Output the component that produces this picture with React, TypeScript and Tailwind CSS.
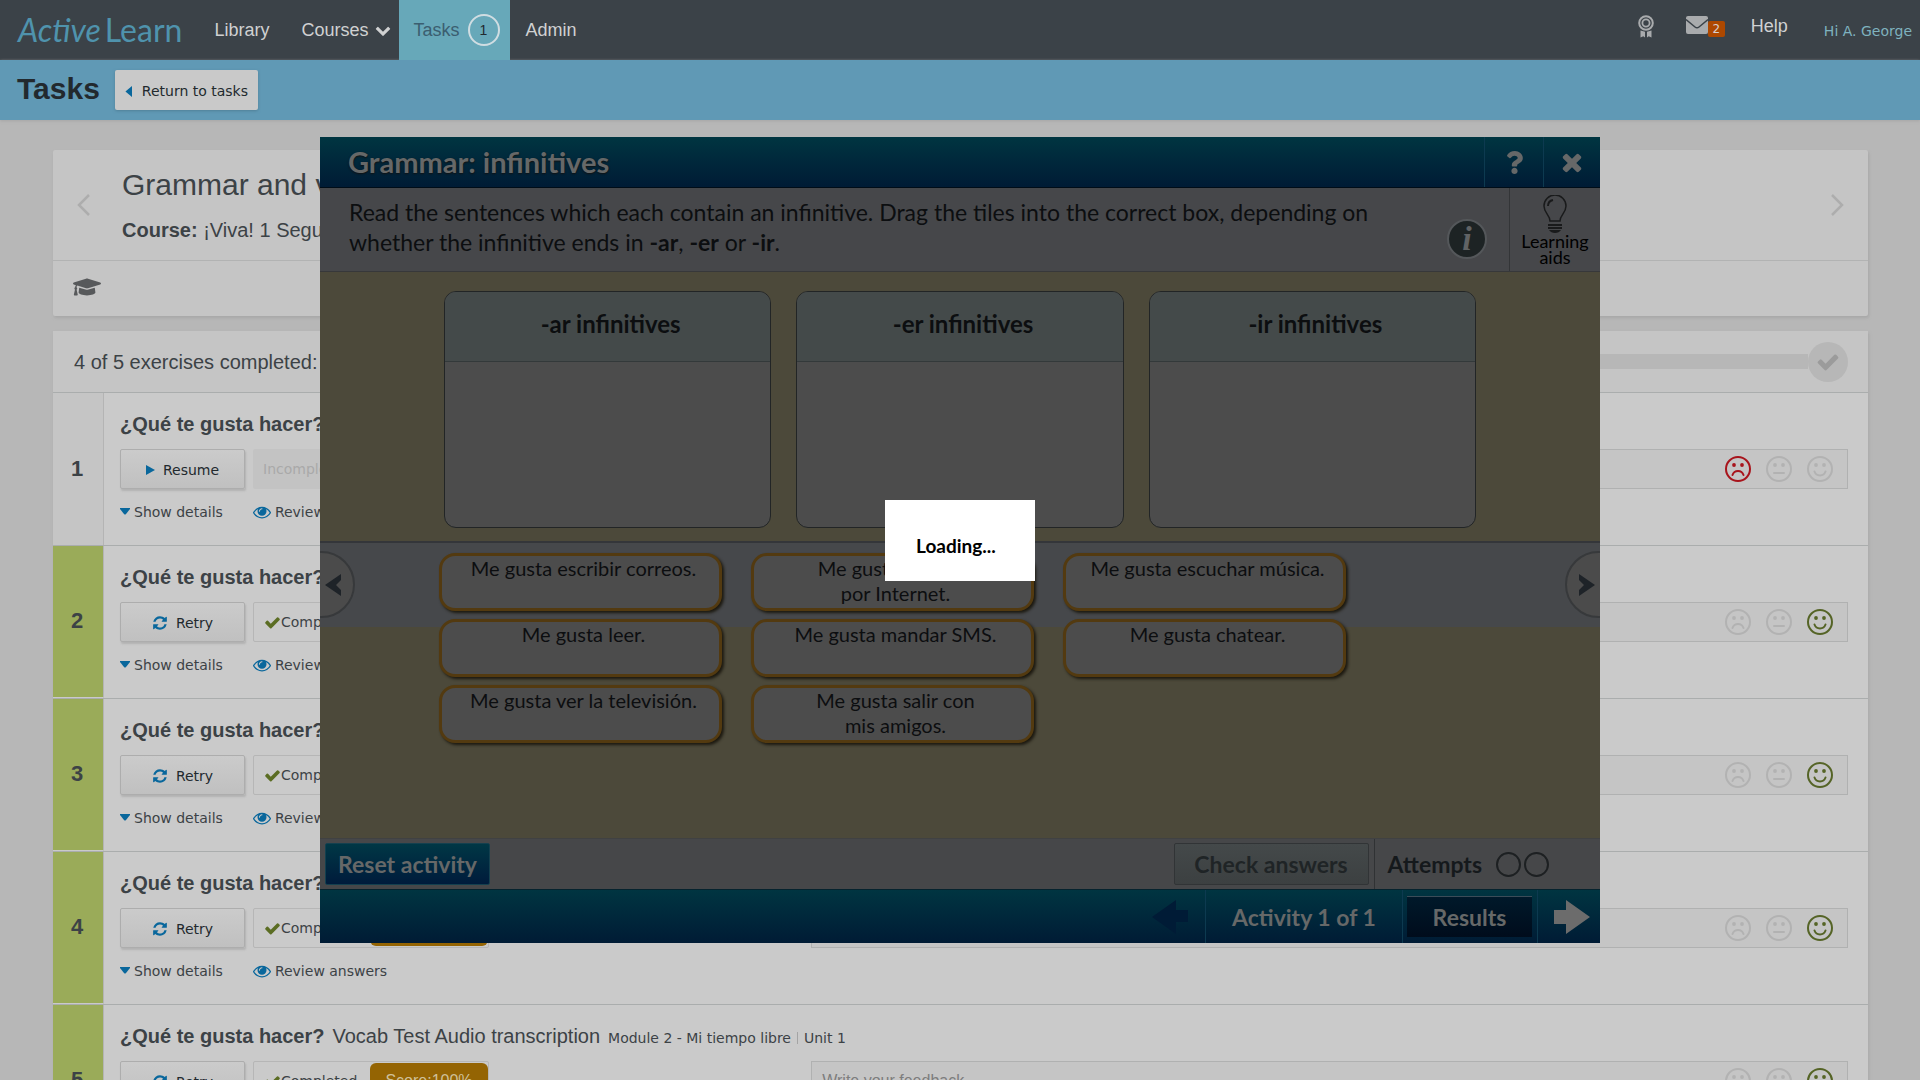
import { useState } from "react";
import { FaGraduationCap, FaQuestion } from "react-icons/fa";

type Mood = "sad" | "neutral" | "happy";

interface Exercise {
  id: number;
  title: string;
  detail?: string;
  place?: string[];
  done: boolean;
  mood: Mood;
}

const exercises: Exercise[] = [
  { id: 1, title: "¿Qué te gusta hacer?", done: false, mood: "sad" },
  { id: 2, title: "¿Qué te gusta hacer?", done: true, mood: "happy" },
  { id: 3, title: "¿Qué te gusta hacer?", done: true, mood: "happy" },
  { id: 4, title: "¿Qué te gusta hacer?", done: true, mood: "happy" },
  {
    id: 5,
    title: "¿Qué te gusta hacer?",
    detail: "Vocab Test Audio transcription",
    place: ["Module 2 - Mi tiempo libre", "Unit 1"],
    done: true,
    mood: "happy",
  },
];

const boxes = ["-ar infinitives", "-er infinitives", "-ir infinitives"];

const tiles = [
  ["Me gusta escribir correos."],
  ["Me gusta navegar", "por Internet."],
  ["Me gusta escuchar música."],
  ["Me gusta leer."],
  ["Me gusta mandar SMS."],
  ["Me gusta chatear."],
  ["Me gusta ver la televisión."],
  ["Me gusta salir con", "mis amigos."],
];

// --- ICONS ---
const paths = {
  check:
    "M1671 566q0 40-28 68l-724 724-136 136q-28 28-68 28t-68-28l-136-136-362-362q-28-28-28-68t28-68l136-136q28-28 68-28t68 28l294 295 656-657q28-28 68-28t68 28l136 136q28 28 28 68z",
  times:
    "M1490 1322q0 40-28 68l-136 136q-28 28-68 28t-68-28l-294-294-294 294q-28 28-68 28t-68-28l-136-136q-28-28-28-68t28-68l294-294-294-294q-28-28-28-68t28-68l136-136q28-28 68-28t68 28l294 294 294-294q28-28 68-28t68 28l136 136q28 28 28 68t-28 68l-294 294 294 294q28 28 28 68z",
  chevronDown:
    "M1683 808l-742 741q-19 19-45 19t-45-19l-742-741q-19-19-19-45.5t19-45.5l166-165q19-19 45-19t45 19l531 531 531-531q19-19 45-19t45 19l166 165q19 19 19 45.5t-19 45.5z",
  eye: "M1664 960q-152-236-381-353 61 104 61 225 0 185-131.5 316.5t-316.5 131.5-316.5-131.5-131.5-316.5q0-121 61-225-229 117-381 353 133 205 333.5 326.5t434.5 121.5 434.5-121.5 333.5-326.5zm-720-384q0-20-14-34t-34-14q-125 0-214.5 89.5t-89.5 214.5q0 20 14 34t34 14 34-14 14-34q0-86 61-147t147-61q20 0 34-14t14-34zm848 384q0 34-20 69-140 230-376.5 368.5t-499.5 138.5-499.5-139-376.5-368q-20-35-20-69t20-69q140-229 376.5-368t499.5-139 499.5 139 376.5 368q20 35 20 69z",
  refresh:
    "M1639 1056q0 5-1 7-64 268-268 434.5t-478 166.5q-146 0-282.5-55t-243.5-157l-129 129q-19 19-45 19t-45-19-19-45v-448q0-26 19-45t45-19h448q26 0 45 19t19 45-19 45l-137 137q71 66 161 102t187 36q134 0 250-65t186-179q11-17 53-117 8-23 30-23h192q13 0 22.5 9.5t9.5 22.5zm25-800v448q0 26-19 45t-45 19h-448q-26 0-45-19t-19-45 19-45l138-138q-148-137-349-137-134 0-250 65t-186 179q-11 17-53 117-8 23-30 23h-199q-13 0-22.5-9.5t-9.5-22.5v-7q65-268 270-434.5t480-166.5q146 0 284 55.5t245 156.5l130-129q19-19 45-19t45 19 19 45z",
};

function Glyph({ name, className }: { name: keyof typeof paths; className: string }) {
  return (
    <svg viewBox="0 0 1792 1792" fill="currentColor" className={className}>
      <path d={paths[name]} />
    </svg>
  );
}

function Face({ mood }: { mood: Mood }) {
  return (
    <svg viewBox="0 0 26 26" className="size-[26px]" fill="none" stroke="currentColor" strokeWidth="2" strokeLinecap="round">
      <circle cx="13" cy="13" r="12" />
      <circle cx="9" cy="9" r="1.9" fill="currentColor" stroke="none" />
      <circle cx="17" cy="9" r="1.9" fill="currentColor" stroke="none" />
      {mood === "sad" && <path d="M7.5 19c.8-2.4 3-4 5.500-4s4.700 1.600 5.500 4" />}
      {mood === "neutral" && <path d="M8 17h10" />}
      {mood === "happy" && <path d="M7.500 15.500c.8 2.300 3 3.900 5.500 3.900s4.700-1.600 5.500-3.900" />}
    </svg>
  );
}

function moodColor(mood: Mood, active: Mood) {
  if (mood !== active) return "text-[#b2b2b2]";
  return mood === "sad" ? "text-[#a8141c]" : "text-[#556426]";
}

// --- PAGE ---
function TopBar() {
  return (
    <header className="flex h-[60px] items-stretch bg-[#3b4248] text-lg text-[#d0d1d2]">
      <a href="#home" className="flex items-center pl-[18px] pr-8 font-['Lato',sans-serif] text-[32px] leading-9 text-[#4f93ad]">
        <span className="italic">Active</span>
        <span className="pl-1">Learn</span>
      </a>
      <nav className="flex">
        <a href="#library" className="flex items-center pr-8">Library</a>
        <a href="#courses" className="flex items-center gap-1.5 pr-2">
          Courses
          <Glyph name="chevronDown" className="size-4" />
        </a>
        <a href="#tasks" className="flex items-center gap-2 bg-[#67a8b9] pl-[15px] pr-2.5 text-[#3b5e70]">
          Tasks
          <span className="flex size-8 items-center justify-center rounded-full border-2 border-[#d0dde2] text-sm text-[#22292e]">1</span>
        </a>
        <a href="#admin" className="flex items-center pl-4">Admin</a>
      </nav>
      <div className="ml-auto flex items-start pr-2">
        <a href="#badges" aria-label="Badges" className="mt-[15px] text-[#a9abad]">
          <svg viewBox="0 0 16 23" className="h-[23px] w-4" fill="currentColor">
            <circle cx="8" cy="8" r="6.800" fill="none" stroke="currentColor" strokeWidth="2" />
            <circle cx="8" cy="8" r="3.600" fill="none" stroke="currentColor" strokeWidth="1.800" />
            <path d="M2.500 15.500v7l2.800-1.300 1.700 1.300v-5.800zM13.500 15.500v7l-2.800-1.300-1.700 1.300v-5.800z" />
          </svg>
        </a>
        <a href="#messages" className="ml-8 mt-4 flex items-start">
          <svg viewBox="0 0 22 18" className="h-[18px] w-[22px]">
            <rect width="22" height="18" rx="2" fill="#a9abad" />
            <path d="M0 3.500l9 7.500q2 1.600 4 0l9-7.500" fill="none" stroke="#3b4248" strokeWidth="1.500" />
          </svg>
          <span className="mt-[5px] h-4 w-[17px] rounded-xs bg-[#ad4800] text-center font-['DejaVu_Sans',sans-serif] text-xs leading-4 text-[#d8d0cc]">2</span>
        </a>
        <a href="#help" className="ml-[26px] mt-3 leading-7">Help</a>
        <a href="#profile" className="ml-9 mt-[21px] font-['DejaVu_Sans',sans-serif] text-sm leading-5 text-[#7fb2bf]">Hi A. George</a>
      </div>
    </header>
  );
}

function ExerciseRow({ exercise }: { exercise: Exercise }) {
  const [mood, setMood] = useState<Mood>(exercise.mood);
  const [feedback, setFeedback] = useState("");

  return (
    <li className="flex border-b border-[#aaadad]">
      <div
        className={`flex w-[51px] shrink-0 items-center justify-center border-r border-[#b4b4b4] pb-0.5 pr-0.5 text-[22px] font-bold ${
          exercise.done ? "border-b border-b-[#cacaca] bg-[#9aab59]" : "bg-[#c5c5c5]"
        }`}
      >
        {exercise.id}
      </div>
      <div className="min-w-0 flex-1 bg-[#cacaca] pb-[23px] pl-4 pr-5 pt-[17px]">
        <h3 className="flex items-baseline gap-2 whitespace-nowrap text-xl leading-7">
          <b>{exercise.title}</b>
          {exercise.detail && <span>{exercise.detail}</span>}
          {exercise.place && (
            <small className="flex gap-1.5 font-['DejaVu_Sans',sans-serif] text-sm leading-5">
              <span>{exercise.place[0]}</span>
              <span className="my-1 border-l border-[#a4a4a4]" />
              <span>{exercise.place[1]}</span>
            </small>
          )}
        </h3>
        <div className="mt-[11px] flex h-10 font-['DejaVu_Sans',sans-serif] text-sm">
          <div className="flex w-2/5 gap-2">
            <button
              type="button"
              className="flex w-[125px] items-center justify-center gap-2 rounded-xs border border-[#adadad] bg-linear-to-b from-[#cbcbcb] to-[#c0c0c0] pt-0.5 text-[#22292e] shadow-[1px_2px_2px_#b2b2b2]"
            >
              {exercise.done ? (
                <Glyph name="refresh" className="size-4 text-[#09679c]" />
              ) : (
                <svg viewBox="0 0 9 10" className="h-2.5 w-[9px]" fill="#09679c">
                  <path d="M0 0l9 5-9 5z" />
                </svg>
              )}
              {exercise.done ? "Retry" : "Resume"}
            </button>
            {exercise.done ? (
              <div className="flex h-10 w-[236px] items-center justify-between rounded-xs border border-[#b6b6b6] pl-2.5">
                <span className="flex items-center">
                  <Glyph name="check" className="size-[17px] text-[#5b6d23]" />
                  Completed
                </span>
                <span className="flex h-9 w-[118px] items-center justify-center rounded-md bg-[#946403] font-['Liberation_Sans',Arial,sans-serif] text-base text-[#cfc09a]">
                  Score:100%
                </span>
              </div>
            ) : (
              <div className="flex h-10 w-[118px] items-center rounded-xs bg-[#c3c3c3] pl-2.5 text-[#a9a9a9]">Incomplete</div>
            )}
          </div>
          <div className="flex flex-1 items-center gap-[15px] border border-[#b0b1b1] bg-[#c5c5c5] pl-2.5 pr-3.5">
            <input
              value={feedback}
              onChange={(e) => setFeedback(e.target.value)}
              aria-label="Write your feedback"
              placeholder="Write your feedback"
              className="min-w-0 flex-1 font-['Liberation_Sans',Arial,sans-serif] text-base outline-none placeholder:text-[#7d7d7d]"
            />
            {(["sad", "neutral", "happy"] as Mood[]).map((m) => (
              <button key={m} type="button" aria-label={m} onClick={() => setMood(m)} className={moodColor(m, mood)}>
                <Face mood={m} />
              </button>
            ))}
          </div>
        </div>
        <div className="mt-[13px] flex gap-[30px] font-['DejaVu_Sans',sans-serif] text-sm leading-5">
          <a href="#details" className="flex gap-1">
            <svg viewBox="0 0 10 7" className="mt-1.5 h-[7px] w-2.5" fill="#09679c">
              <path d="M0 0h10v1l-4 5q-1 1-2 0l-4-5z" />
            </svg>
            Show details
          </a>
          <a href="#answers" className="flex items-center gap-1">
            <Glyph name="eye" className="size-[18px] text-[#09679c]" />
            Review answers
          </a>
        </div>
      </div>
    </li>
  );
}

function TasksPage() {
  return (
    <div className="text-[#3c4246]">
      <TopBar />
      <div className="flex h-[60px] items-center gap-[15px] bg-[#6099b5] pl-[17px] shadow-[0_1px_3px_#a5a5a5]">
        <h1 className="pb-0.5 text-3xl font-bold leading-9 text-[#22292e]">Tasks</h1>
        <button
          type="button"
          className="flex h-10 items-center gap-2.5 rounded-xs bg-[#c9c9c9] px-2.5 pt-0.5 font-['DejaVu_Sans',sans-serif] text-sm text-[#22292e] shadow-[0_1px_3px_#4f7f96]"
        >
          <svg viewBox="0 0 7 11" className="h-[11px] w-[7px]" fill="#09679c">
            <path d="M7 0v11l-6-5q-1-.5 0-1z" />
          </svg>
          Return to tasks
        </button>
      </div>

      <main className="space-y-[15px] pl-[53px] pr-13 pt-[30px]">
        <section className="rounded-xs bg-[#c5c5c5] shadow-[1px_2px_3px_#a8a8a8]">
          <div className="flex items-center border-b border-[#b2b3b3] px-6 pb-[18px] pt-[17px]">
            <button type="button" aria-label="Previous task" className="text-[#adadad]">
              <svg viewBox="0 0 13 22" className="h-[22px] w-[13px]" fill="none" stroke="currentColor" strokeWidth="2.500">
                <path d="M12 1L2 11l10 10" />
              </svg>
            </button>
            <div className="flex-1 pl-8">
              <h2 className="text-3xl leading-9">Grammar and vocabulary</h2>
              <p className="mt-[15px] text-xl leading-6">
                <b>Course:</b> ¡Viva! 1 Segunda edición
              </p>
            </div>
            <button type="button" aria-label="Next task" className="text-[#adadad]">
              <svg viewBox="0 0 13 22" className="h-[22px] w-[13px]" fill="none" stroke="currentColor" strokeWidth="2.500">
                <path d="M1 1l10 10L1 21" />
              </svg>
            </button>
          </div>
          <div className="flex h-[55px] items-center pb-1 pl-5">
            <FaGraduationCap className="size-7 text-[#57595b]" />
          </div>
        </section>

        <section className="bg-[#c5c5c5] shadow-[1px_2px_3px_#a8a8a8]">
          <div className="flex h-[62px] items-center border-b border-[#aaadad] pl-[21px] pr-5 text-xl">
            <span>4 of 5 exercises completed:</span>
            <div className="ml-4 h-[15px] flex-1 bg-[#b7b7b7]" />
            <span className="flex size-10 items-center justify-center rounded-full bg-[#b7b7b7]">
              <Glyph name="check" className="size-6 text-[#9b9b9b]" />
            </span>
          </div>
          <ul>
            {exercises.map((exercise) => (
              <ExerciseRow key={exercise.id} exercise={exercise} />
            ))}
          </ul>
        </section>
      </main>
    </div>
  );
}

// --- ACTIVITY PLAYER ---
function ActivityPlayer() {
  return (
    <div role="dialog" aria-label="Grammar: infinitives" className="w-full max-w-7xl bg-[#4c493a] font-['Lato',sans-serif] text-[#0c0e10]">
      <div className="flex h-[51px] items-stretch border-b border-[#000d18] bg-linear-to-b from-[#003541] to-[#001b35] pl-7 text-[#666868]">
        <h2 className="flex-1 self-center text-[29px] font-bold leading-9 [text-shadow:0_1px_2px_#111]">Grammar: infinitives</h2>
        <button type="button" aria-label="Help" className="flex w-[59px] items-center justify-center border-l border-[#0d3a50]">
          <FaQuestion className="size-[23px]" />
        </button>
        <button type="button" aria-label="Close" className="flex w-[57px] items-center justify-center border-l border-[#0d3a50]">
          <Glyph name="times" className="size-7" />
        </button>
      </div>

      <div className="flex h-[84px] border-b border-[#37383a] bg-[#46474a]">
        <p className="flex-1 pl-[29px] pt-[9px] text-[23px] leading-[30px]">
          Read the sentences which each contain an infinitive. Drag the tiles into the correct box, depending on
          <br />
          whether the infinitive ends in <b>-ar</b>, <b>-er</b> or <b>-ir</b>.
        </p>
        <button
          type="button"
          aria-label="Information"
          className="mr-[22px] mt-[31px] flex size-10 items-center justify-center rounded-full border-2 border-[#54575a] bg-[#1d2324] font-['Liberation_Serif',serif] text-[34px] font-bold italic leading-9 text-[#616365]"
        >
          i
        </button>
        <button type="button" className="flex w-[91px] flex-col items-center border-l border-[#333537] pt-[7px] text-lg leading-4 text-black">
          <svg viewBox="0 0 24 38" className="h-[38px] w-6" fill="none" stroke="#191a1b" strokeWidth="1.500">
            <path d="M7 26c0-6-6-8-6-15a11 11 0 0 1 22 0c0 7-6 9-6 15z" />
            <path d="M5 11q0-5 5-6" strokeWidth="2" />
            <path d="M5 30h14M5 33h14" strokeWidth="2" />
            <path d="M6 35h12q-2 3-6 3t-6-3z" fill="#191a1b" stroke="none" />
          </svg>
          <span>
            Learning
            <br />
            aids
          </span>
        </button>
      </div>

      <div className="grid grid-cols-3 gap-[25px] px-[124px] pb-[13px] pt-[19px]">
        {boxes.map((box) => (
          <section key={box} className="h-[237px] overflow-hidden rounded-xl border border-[#222526] bg-[#4c4c4c]">
            <h3 className="h-[70px] border-b border-[#33393a] bg-[#444a4a] pl-1.5 pt-[17px] text-center text-2xl font-bold leading-[30px]">{box}</h3>
          </section>
        ))}
      </div>

      <div className="relative overflow-hidden border-t-2 border-[#34363a] bg-[linear-gradient(to_bottom,#46484b_84px,#4c493a_84px)] pb-[95px] pt-2.5">
        <button type="button" aria-label="Previous tiles" className="absolute -left-8 top-2 flex size-[67px] items-center justify-end rounded-full border-2 border-[#37393b] bg-[#4b4b4b] pr-3">
          <svg viewBox="0 0 16 22" className="h-[22px] w-4" fill="#1e2328">
            <path d="M16 0v6l-5 5 5 5v6L0 11z" />
          </svg>
        </button>
        <div className="ml-[119px] grid w-[907px] grid-cols-3 gap-x-[29px] gap-y-2">
          {tiles.map((lines) => (
            <div
              key={lines[0]}
              className="h-[58px] rounded-2xl border-3 border-[#533a10] bg-[#4c4c4c] pl-1.5 text-center text-xl leading-[25px] shadow-[2px_2px_3px_#1c1910]"
            >
              {lines.map((line) => (
                <p key={line}>{line}</p>
              ))}
            </div>
          ))}
        </div>
        <button type="button" aria-label="Next tiles" className="absolute -right-8 top-2 flex size-[67px] items-center rounded-full border-2 border-[#37393b] bg-[#4b4b4b] pl-3">
          <svg viewBox="0 0 16 22" className="h-[22px] w-4" fill="#1e2328">
            <path d="M0 0v6l5 5-5 5v6l16-11z" />
          </svg>
        </button>
      </div>

      <div className="flex h-[51px] items-center border-t border-[#404142] bg-[#464749] pl-[5px] pr-[51px] text-[23px] font-bold leading-7">
        <button type="button" className="h-[42px] rounded-xs border border-[#14404f] bg-linear-to-b from-[#003745] to-[#001b3b] px-3 text-[#666868]">
          Reset activity
        </button>
        <button type="button" className="ml-auto h-[42px] w-[195px] rounded-xs border border-[#313436] bg-linear-to-b from-[#44494a] to-[#3c4041] text-[#1f2426]">
          Check answers
        </button>
        <div className="ml-[5px] flex h-full items-center border-l border-[#303234] pl-[13px] text-[#15191c]">
          Attempts
          <span className="ml-3.5 size-[25px] rounded-full border-2 border-[#1d2022]" />
          <span className="ml-[3px] size-[25px] rounded-full border-2 border-[#1d2022]" />
        </div>
      </div>

      <div className="flex h-[54px] items-stretch justify-end border-t border-[#06232e] bg-linear-to-b from-[#003541] to-[#001b35] text-[23px] font-bold leading-7 text-[#666868]">
        <button type="button" aria-label="Previous activity" className="flex w-[53px] items-center">
          <svg viewBox="0 0 36 34" className="h-[34px] w-9" fill="#001b36">
            <path d="M0 17L24 0v10h12v12H24v12z" />
          </svg>
        </button>
        <span className="flex w-[197px] items-center justify-center border-l border-[#0d3a50]">Activity 1 of 1</span>
        <div className="flex w-[135px] items-center border-l border-[#0d3a50] pl-1">
          <button type="button" className="h-[41px] w-[125px] border-t border-[#3b4c58] bg-linear-to-b from-[#00192a] to-[#000c1c]">Results</button>
        </div>
        <button type="button" aria-label="Next activity" className="flex w-[63px] items-center border-l border-[#0d3a50] pl-4">
          <svg viewBox="0 0 36 34" className="h-9 w-9" fill="#6c6c6c">
            <path d="M36 17L12 0v10H0v14h12v10z" />
          </svg>
        </button>
      </div>
    </div>
  );
}

export default function App() {
  return (
    <div className="h-screen overflow-hidden bg-[#b7b7b7] font-['Liberation_Sans',Arial,sans-serif]">
      <TasksPage />
      <div className="fixed inset-0 flex items-center justify-center">
        <ActivityPlayer />
      </div>
      <div className="fixed inset-0 flex items-center justify-center">
        <div role="status" className="w-[150px] bg-white pb-[22px] pl-[31px] pt-8 font-['Lato',sans-serif] text-[19px] font-bold leading-[27px] text-black">
          Loading...
        </div>
      </div>
    </div>
  );
}
